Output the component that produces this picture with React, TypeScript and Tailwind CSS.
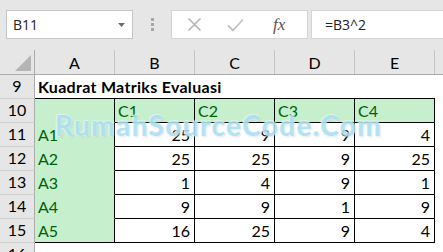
import React from "react";

const cellFont = { fontFamily: "Lato, 'Liberation Sans', sans-serif" };

const data: [string, number[]][] = [
  ["A1", [25, 9, 9, 4]],
  ["A2", [25, 25, 9, 25]],
  ["A3", [1, 4, 9, 1]],
  ["A4", [9, 9, 1, 9]],
  ["A5", [16, 25, 9, 4]],
];

function RowHead({ n }: { n: number }) {
  return (
    <div className="w-[35px] h-[24px] shrink-0 bg-[#e6e6e6] border-r border-r-[#ababab] border-b border-b-[#d0d0d0] flex items-end justify-center pb-[2px] text-[16px] text-black leading-none">
      <span className="pb-[2px]">{n}</span>
    </div>
  );
}

export default function App() {
  return (
    <div className="relative w-[443px] h-[252px] overflow-hidden bg-white" style={cellFont}>
      {/* formula bar */}
      <div className="h-[45px] bg-[#e6e6e6] flex items-start pt-[10px] pl-[6px]">
        <div
          className="w-[127px] h-[29px] bg-white border border-[#c6c6c6] flex items-center justify-between pl-[6px] pr-[7px] text-[14px] text-[#222]"
          style={{ fontFamily: "'Open Sans', sans-serif" }}
        >
          <span>B11</span>
          <svg width="7" height="4" viewBox="0 0 7 4">
            <path d="M0 0h7L3.5 4z" fill="#6b6b6b" />
          </svg>
        </div>
        <div className="w-[38px] h-[29px] flex flex-col items-center justify-center gap-[2px]">
          <div className="w-[3px] h-[3px] bg-[#a6a6a6]" />
          <div className="w-[3px] h-[3px] bg-[#a6a6a6]" />
          <div className="w-[3px] h-[3px] bg-[#a6a6a6]" />
        </div>
        <div className="w-[137px] h-[29px] bg-white border border-[#d4d4d4] flex items-center">
          <svg className="ml-[15px]" width="15" height="15" viewBox="0 0 15 15">
            <path d="M1.5 1.5l12 12M13.5 1.5l-12 12" stroke="#b3b3b3" strokeWidth="1.6" />
          </svg>
          <svg className="ml-[25px]" width="17" height="14" viewBox="0 0 17 14">
            <path d="M1 7.5l5 5L16 1.5" stroke="#c2c2c2" strokeWidth="1.8" fill="none" />
          </svg>
          <span
            className="ml-[29px] text-[17px] italic text-[#555]"
            style={{ fontFamily: "'Liberation Serif', serif" }}
          >
            fx
          </span>
        </div>
        <div
          className="ml-[3px] flex-1 h-[29px] bg-white border border-[#d4d4d4] border-r-0 flex items-center pl-[13px] text-[14px] text-[#222]"
          style={{ fontFamily: "'Open Sans', sans-serif" }}
        >
          =B3^2
        </div>
      </div>

      {/* column headers */}
      <div className="h-[30px] bg-[#e6e6e6] flex border-b border-b-[#ababab]">
        <div className="w-[35px] shrink-0 flex items-end justify-end">
          <div className="w-[35px] h-[24px] border-r border-r-[#ababab] flex items-end justify-end pr-[3px] pb-[3px]">
            <svg width="16" height="16" viewBox="0 0 16 16">
              <path d="M16 0V16H0z" fill="#b4b4b4" />
            </svg>
          </div>
        </div>
        {["A", "B", "C", "D", "E"].map((c) => (
          <div key={c} className="w-[80px] shrink-0 flex items-end">
            <div className="w-full h-[24px] border-r border-r-[#c4c4c4] flex items-center justify-center text-[16px] text-black pt-[1px]">
              {c}
            </div>
          </div>
        ))}
        <div className="flex-1" />
      </div>

      {/* row 9 */}
      <div className="flex">
        <RowHead n={9} />
        <div className="w-[400px] h-[24px] border-b border-b-black flex items-end pl-[3px] pb-[3px] text-[16px] font-bold tracking-[0.3px] text-black leading-none">
          Kuadrat Matriks Evaluasi
        </div>
      </div>

      {/* row 10 */}
      <div className="flex">
        <RowHead n={10} />
        <div className="w-[80px] h-[24px] bg-[#c6efce] border-r border-r-black border-b border-b-[#c6efce]" />
        {["C1", "C2", "C3", "C4"].map((c) => (
          <div
            key={c}
            className="w-[80px] h-[24px] bg-[#c6efce] border-r border-r-black border-b border-b-black flex items-end pl-[3px] pb-[3px] text-[16px] text-[#006100] leading-none"
          >
            {c}
          </div>
        ))}
      </div>

      {data.map(([label, vals], i) => (
        <div key={label} className="flex">
          <RowHead n={11 + i} />
          <div
            className={
              "w-[80px] h-[24px] bg-[#c6efce] border-r border-r-black border-b flex items-end pl-[3px] pb-[3px] text-[16px] text-[#006100] leading-none " +
              (i === 4 ? "border-b-black" : "border-b-[#c6efce]")
            }
          >
            {label}
          </div>
          {vals.map((v, j) => (
            <div
              key={j}
              className="w-[80px] h-[24px] border-r border-r-black border-b border-b-black flex items-end justify-end pr-[4px] pb-[3px] text-[16px] text-black leading-none"
            >
              {v}
            </div>
          ))}
        </div>
      ))}

      {/* row 16 */}
      <div className="flex">
        <RowHead n={16} />
      </div>

      {/* watermark */}
      <div
        className="absolute left-[55px] top-[111px] text-[28px] font-black tracking-[1.3px] text-[#abe0f2] leading-none pointer-events-none opacity-90"
        style={{
          fontFamily: "Lato, 'DejaVu Sans', sans-serif",
          textShadow: "0 0 2px #fff, 0 0 2px #fff, 1px 1px 2px rgba(0,0,0,0.15)",
        }}
      >
        RumahSourceCode.Com
      </div>
    </div>
  );
}
